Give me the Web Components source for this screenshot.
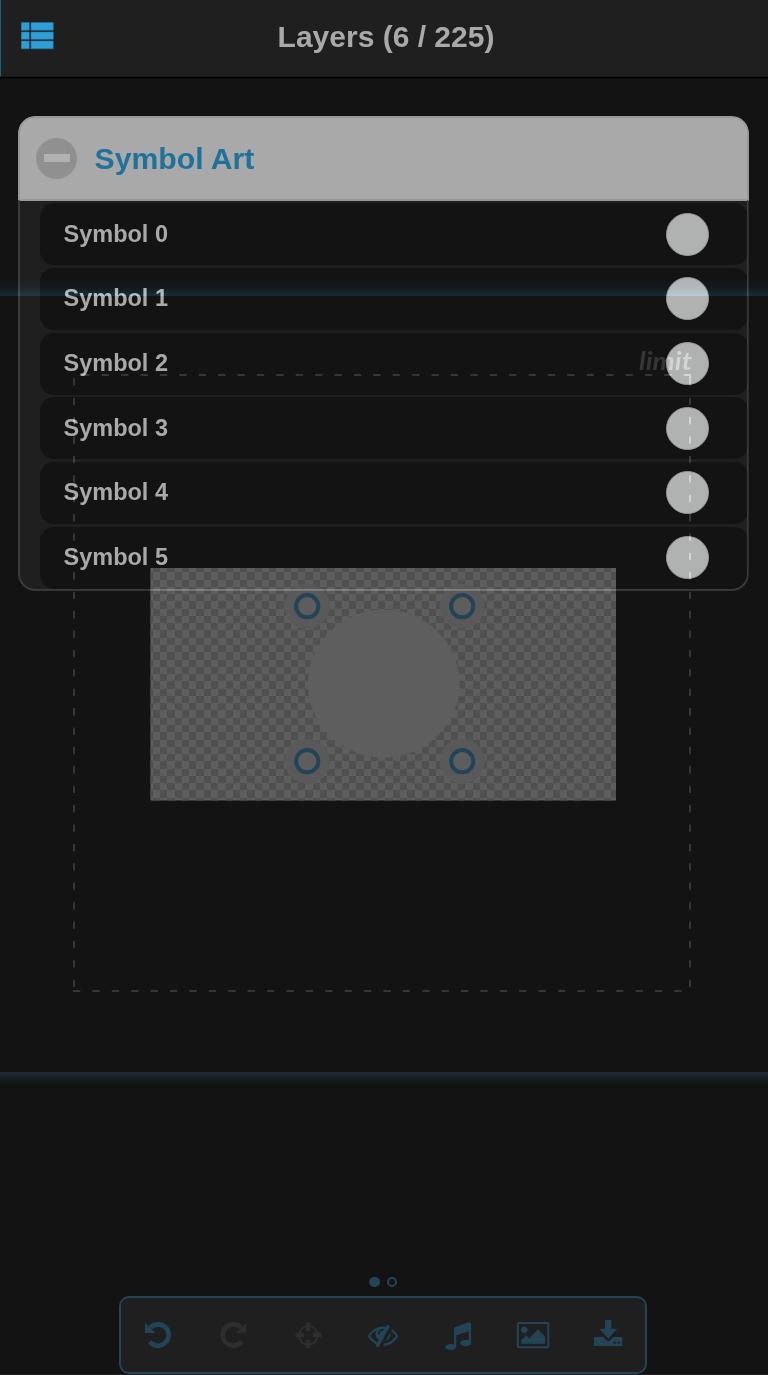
<!DOCTYPE html>
<html lang="en">
<head>
<meta charset="utf-8">
<title>Layers</title>
<style>
html,body{margin:0;background:#131313}
body{font-family:"Liberation Sans",Arial,sans-serif}
</style>
</head>
<body>
<layers-app></layers-app>
<script>
class Base extends HTMLElement{
  connectedCallback(){
    if(this.shadowRoot)return;
    this.attachShadow({mode:'open'}).innerHTML=this.render();
  }
}

customElements.define('title-bar',class extends Base{
  render(){return `<style>
:host{display:flex;align-items:center;height:77px;box-sizing:border-box;background:#1f1f1f;border-bottom:1px solid #181818;border-left:1px solid #176082;box-shadow:0 1.5px 0 #000;position:relative}
svg{margin-left:20px;width:34px;height:28px;flex:none;margin-top:-4px}
h1{flex:1;margin:0 74px 3px 23px;text-align:center;font-size:30px;line-height:36px;font-weight:bold;color:#a9a9a9;white-space:nowrap}
</style>
<svg viewBox="0 0 34 28" fill="#2f9fd8" stroke="#27749c" stroke-width=".6"><path d="M.3.4h8v7.8h-8zM10 .4h22.300v7.800H10zM.3 10h8v7.300h-8zM10 10h22.300v7.300H10zM.3 19h8v7.800h-8zM10 19h22.300v7.800H10z"/></svg>
<h1><slot></slot></h1>`}
});

customElements.define('layer-group',class extends Base{
  render(){return `<style>
:host{display:block;box-sizing:border-box;width:730.500px;height:474.500px;border-radius:17px;background:#1f1f1f;overflow:hidden;position:relative}
:host::after{content:"";position:absolute;inset:0;border:2px solid #3b3b3b;border-top:0;border-radius:17px;clip-path:inset(84px 0 0 0)}
header{display:flex;align-items:center;height:84.500px;box-sizing:border-box;background:#a9a9a9;border:2px solid #989898;border-radius:17px 17px 0 0;padding-left:16px}
i{width:41px;height:41px;border-radius:50%;background:#909090;display:flex;align-items:center;justify-content:center}
i::before{content:"";width:26px;height:8px;background:#b0b2b2}
h2{margin:2px 0 0 17.500px;font-size:30.2px;line-height:36px;color:#21729a;white-space:nowrap}
div{display:grid;grid-auto-rows:62px;row-gap:2.700px;padding:2.500px 1px 0 22px}
</style>
<header><i></i><h2>${this.getAttribute('name')}</h2></header><div><slot></slot></div>`}
});

customElements.define('layer-row',class extends Base{
  render(){return `<style>
:host{display:flex;align-items:center;justify-content:space-between;background:#131313;border-radius:14px;padding:0 38.500px 0 23.500px;font-size:23.500px;font-weight:bold;color:#a9a9a9}
b{box-sizing:border-box;width:43px;height:43px;border-radius:50%;background:#b0b2b2;border:1px solid #999}
</style><span><slot></slot></span><b></b>`}
});

customElements.define('art-canvas',class extends Base{
  checks(){
    const edges=(start,first,end)=>{
      const e=[start];
      for(let v=first;v<end-.5;v+=7.27)e.push(Math.round(v));
      e.push(end);
      return e;
    };
    const xs=edges(150.5,152.8,616),ys=edges(568,572.3,800.5);
    let d='';
    for(let r=0;r<ys.length-1;r++)for(let c=0;c<xs.length-1;c++)
      if((r+c)%2)d+=`M${xs[c]} ${ys[r]}H${xs[c+1]}V${ys[r+1]}H${xs[c]}Z`;
    return d;
  }
  render(){
    const handles=[[307,606],[462,606],[307,761],[462,761]].map(([x,y])=>
      `<circle cx="${x+.2}" cy="${y+.2}" r="22.500" fill="#464646"/><circle cx="${x+.2}" cy="${y+.2}" r="11.100" fill="#4a4a4a" stroke="#0f3143" stroke-width="4"/>`).join('');
    return `<style>
:host{display:block;position:absolute;inset:0;mix-blend-mode:plus-lighter;pointer-events:none}
svg{display:block}
</style>
<svg width="768" height="1375" viewBox="0 0 768 1375">
<defs>
<linearGradient id="up" x1="0" y1="1" x2="0" y2="0"><stop offset="0" stop-color="#091a25"/><stop offset=".4" stop-color="#03090d"/><stop offset="1" stop-color="#000"/></linearGradient>
<linearGradient id="down" x1="0" y1="0" x2="0" y2="1"><stop offset="0" stop-color="#0a1923"/><stop offset=".5" stop-color="#03090b"/><stop offset="1" stop-color="#000"/></linearGradient>
</defs>
<rect y="280" width="768" height="16" fill="url(#up)"/>
<rect y="1072" width="768" height="14" fill="url(#down)"/>
<g stroke="#232323" stroke-width="2" stroke-dasharray="7.300 12.100" fill="none">
<path d="M82.300 375H691" /><path d="M73 991H684"/><path d="M74 378.300V989"/><path d="M690 378.300V989"/><path d="M690 376v2" stroke-dasharray="none"/>
</g>
<text x="639" y="370" font-family="Lato,sans-serif" font-size="24" font-weight="bold" font-style="italic" fill="#222" textLength="53" lengthAdjust="spacingAndGlyphs">limit</text>
<rect x="150.500" y="568" width="465.500" height="232.500" fill="#4b4b4b"/>
<path d="${this.checks()}" fill="#3d3d3d"/>
<ellipse cx="383.800" cy="683.700" rx="76" ry="74" fill="#4b4b4b"/>
${handles}
</svg>`}
});

customElements.define('page-dots',class extends Base{
  render(){return `<style>
:host{display:flex;justify-content:center;gap:7px;height:11px}
i{box-sizing:border-box;width:10.500px;height:10.500px;border-radius:50%;border:2.500px solid #224456}
i:first-of-type{background:#224456}
</style><i></i><i></i>`}
});

customElements.define('tool-bar',class extends Base{
  render(){return `<style>
:host{display:grid;grid-template-columns:repeat(7,75px);justify-content:center;align-items:center;justify-items:center;box-sizing:border-box;width:528.500px;height:78px;border:2px solid #224456;border-radius:10px;background:#1f1f1f}
</style><slot></slot>`}
});

const ICONS={
undo:['90 171 108 108','<path d="M119 245A32 32 0 1 0 121 203" fill="none" stroke="currentColor" stroke-width="14"/><path d="M105 188V219H136Z"/>'],
redo:['315 171 108 108','<path d="M395 245A32 32 0 1 1 393 203" fill="none" stroke="currentColor" stroke-width="14"/><path d="M409 188V219H378Z"/>'],
target:['540 171 108 108','<circle cx="595" cy="226" r="28" fill="none" stroke="currentColor" stroke-width="6"/><path d="M588 187h13v26h-13zM588 239h13v26h-13zM556 219h26v13h-26zM608 219h26v13h-26z"/>'],
hide:['-180 -180 2150 2150','<path d="M555 1335l78-141q-87-63-136-159t-49-203q0-121 61-225-229 117-381 353 167 258 427 375zm389-759q0-20-14-34t-34-14q-125 0-214.500 89.500t-89.500 214.500q0 20 14 34t34 14 34-14 14-34q0-86 61-147t147-61q20 0 34-14t14-34zm363-191q0 7-1 9-106 189-316 567t-315 566l-49 89q-10 16-28 16-12 0-134-70-16-10-16-28 0-12 44-87-143-65-263.500-173t-208.500-245q-20-31-20-69t20-69q153-235 380-371t496-136q89 0 180 17l54-97q10-16 28-16 5 0 18 6t31 15.500 33 18.500 31.500 18.500 19.500 11.500q16 10 16 27zm37 447q0 139-79 253.500t-209 164.500l280-502q8 45 8 84zm448 128q0 35-20 69-39 64-109 145-150 172-347.500 267t-419.500 95l74-132q212-18 392.500-137t301.500-307q-115-179-282-294l63-112q95 64 182.500 153t144.500 184q20 34 20 69z"/>'],
music:['180 171 108 108','<path d="M222 205Q222 201 227 200L267 187Q273 185 273 191V250H266V214L229 226V262H222Z"/><ellipse cx="257" cy="249" rx="16.500" ry="9.500"/><ellipse cx="212" cy="261" rx="16.500" ry="9"/>'],
image:['405 171 108 108','<rect x="413.500" y="189" width="91.500" height="73" rx="3" fill="none" stroke="currentColor" stroke-width="6"/><circle cx="433" cy="210" r="9.500"/><path d="M424 251V240L438 226 448 235 474 208 495 230V251Z"/>'],
save:['630 171 108 108','<path d="M675 180h19v26h18L685 236 658 206h17z"/><path fill-rule="evenodd" d="M645 231H670L680 241Q685 245 690 241L700 231H724Q727 231 727 234V255Q727 258 724 258H645Q642 258 642 255V234Q642 231 645 231ZM701 245v6h6v-6zM713 245v6h6v-6z"/>']
};
customElements.define('tool-icon',class extends Base{
  render(){const [box,art]=ICONS[this.getAttribute('name')];return `<style>
:host{display:block;color:#224456}
:host([disabled]){color:#2e2e2e}
svg{display:block;width:36px;height:36px}
</style><svg viewBox="${box}" fill="currentColor">${art}</svg>`}
});

customElements.define('layers-app',class extends Base{
  render(){return `<style>
:host{display:flex;flex-direction:column;position:relative;isolation:isolate;width:768px;height:1375px;background:#131313;overflow:hidden;box-sizing:border-box;border-bottom:1px solid #241f20}
layer-group{margin:39.200px 0 0 18px}
page-dots{margin-top:auto;padding-right:2px}
tool-bar{margin:8.500px 0 0 118.700px;flex:none}
</style>
<title-bar>Layers (6 / 225)</title-bar>
<layer-group name="Symbol Art">${[0,1,2,3,4,5].map(n=>`<layer-row>Symbol ${n}</layer-row>`).join('')}</layer-group>
<page-dots></page-dots>
<tool-bar><tool-icon name="undo"></tool-icon><tool-icon name="redo" disabled></tool-icon><tool-icon name="target" disabled></tool-icon><tool-icon name="hide"></tool-icon><tool-icon name="music"></tool-icon><tool-icon name="image"></tool-icon><tool-icon name="save"></tool-icon></tool-bar>
<art-canvas></art-canvas>`}
});
</script>
</body>
</html>
